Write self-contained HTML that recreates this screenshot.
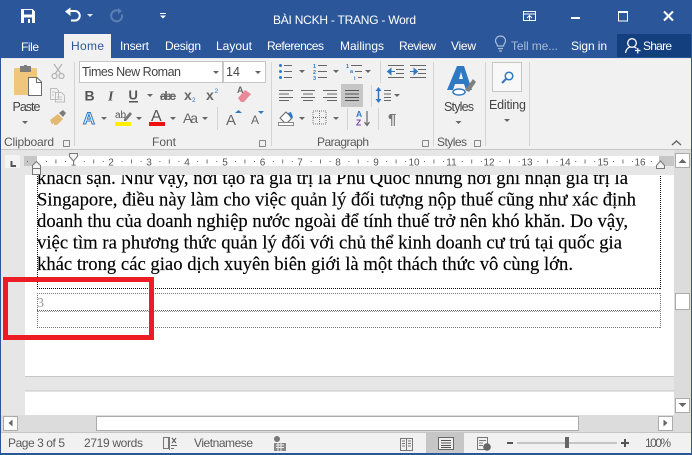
<!DOCTYPE html>
<html><head><meta charset="utf-8"><style>
html,body{margin:0;padding:0;background:#fff}
svg{display:block;font-family:"Liberation Sans",sans-serif}
.t{fill:#fff;font-size:12px}
.r{fill:#444;font-size:12.5px}
.g{fill:#5a5a5a;font-size:12px}
.n{fill:#555;font-size:10px;text-anchor:middle}
.d{fill:#000;stroke:#000;stroke-width:.15px;font-family:"Liberation Serif",serif;font-size:18.67px}
</style></head><body>
<svg width="692" height="455" viewBox="0 0 692 455" xmlns="http://www.w3.org/2000/svg">
<defs><path id="ar" d="M-3 0h6l-3 3z" fill="#666"/></defs>
<rect width="692" height="455" fill="#fff"/>
<!-- document area -->
<rect x="0" y="150" width="25" height="265" fill="#e6e6e6"/>
<rect x="25" y="376" width="649" height="15" fill="#e6e6e6"/>
<rect x="25" y="376" width="649" height="1" fill="#c6c6c6"/>
<rect x="25" y="390.500" width="649" height="1" fill="#c6c6c6"/>
<text class="d" x="37" y="184" textLength="591" lengthAdjust="spacing">khách sạn. Như vậy, nơi tạo ra giá trị là Phú Quốc nhưng nơi ghi nhận giá trị là</text>
<text class="d" x="37" y="205.500" textLength="599" lengthAdjust="spacing">Singapore, điều này làm cho việc quản lý đối tượng nộp thuế cũng như xác định</text>
<text class="d" x="37" y="227" textLength="591" lengthAdjust="spacing">doanh thu của doanh nghiệp nước ngoài để tính thuế trở nên khó khăn. Do vậy,</text>
<text class="d" x="37" y="248.500" textLength="585" lengthAdjust="spacing">việc tìm ra phương thức quản lý đối với chủ thể kinh doanh cư trú tại quốc gia</text>
<text class="d" x="37" y="270" textLength="536" lengthAdjust="spacing">khác trong các giao dịch xuyên biên giới là một thách thức vô cùng lớn.</text>
<path d="M37.500 170V289M660.500 170V289M37 288.500H661" fill="none" stroke="#111" stroke-width="1" stroke-dasharray="1 1"/>
<path d="M37 293.500H661M37 327.500H661M37.500 293V328M660.500 293V328" fill="none" stroke="#777" stroke-width="1" stroke-dasharray="1 1"/>
<path d="M37 310.500H661" stroke="#666" stroke-width="1" stroke-dasharray="1 1"/>
<path d="M38 311.500H661" stroke="#999" stroke-width="1" stroke-dasharray="1 1"/>
<text x="37" y="307" font-family="Liberation Serif,serif" font-size="14" fill="#999">3</text>
<!-- ruler -->
<rect x="0" y="150" width="674" height="25" fill="#e6e6e6"/>
<rect x="5" y="155" width="15" height="13" fill="#f4f4f4"/>
<path d="M10.500 161v6h5.500v-2h-3.500v-4z" fill="#555"/>
<rect x="24" y="156" width="13" height="10" fill="#c6c6c6"/>
<rect x="37" y="156" width="622" height="10" fill="#fff"/>
<rect x="659" y="156" width="15" height="10" fill="#c6c6c6"/>
<rect x="27" y="161" width="1" height="1" fill="#666"/>
<path d="M37 161.500H659" stroke="#666" stroke-width="1" stroke-dasharray="0 9 1 18 1 8.800"/>
<path d="M37 161.500H659" stroke="#777" stroke-width="4" stroke-dasharray="0 18.400 1 18.400"/>
<g class="n"><text class="n" x="73.500" y="165.500">1</text><text class="n" x="111" y="165.500">2</text><text class="n" x="149" y="165.500">3</text><text class="n" x="187" y="165.500">4</text><text class="n" x="225" y="165.500">5</text><text class="n" x="262.500" y="165.500">6</text><text class="n" x="300" y="165.500">7</text><text class="n" x="338" y="165.500">8</text><text class="n" x="376" y="165.500">9</text><text class="n" x="414" y="165.500">10</text><text class="n" x="451.500" y="165.500">11</text><text class="n" x="489" y="165.500">12</text><text class="n" x="527" y="165.500">13</text><text class="n" x="565" y="165.500">14</text><text class="n" x="603" y="165.500">15</text><text class="n" x="640" y="165.500">16</text></g>
<path d="M69.500 153.500h8v3l-4 4.500-4-4.500z" fill="#f4f4f4" stroke="#777"/>
<path d="M32.500 174.500v-9l4-4 4 4v9z" fill="#f4f4f4" stroke="#777"/>
<path d="M32.500 168.500h8" stroke="#777"/>
<path d="M656.500 168.500v-3l4-4.500 4 4.500v3z" fill="#f4f4f4" stroke="#777"/>
<!-- vertical scrollbar -->
<rect x="674" y="150" width="18" height="283" fill="#dcdcdc"/>
<rect x="675.500" y="153.500" width="14" height="14" fill="#fff" stroke="#ababab"/>
<path d="M678.500 163l4-4 4 4z" fill="#666"/>
<rect x="675.500" y="293.500" width="14" height="16" fill="#fff" stroke="#ababab"/>
<rect x="675.500" y="398.500" width="14" height="14" fill="#fff" stroke="#ababab"/>
<path d="M678.500 403h8l-4 4z" fill="#666"/>
<!-- horizontal scrollbar -->
<rect x="0" y="415" width="674" height="18" fill="#dcdcdc"/>
<rect x="3.500" y="416.500" width="14" height="14" fill="#fff" stroke="#ababab"/>
<path d="M12.500 419.500v7l-4-3.500z" fill="#666"/>
<rect x="96.500" y="416.500" width="482" height="14" fill="#fff" stroke="#ababab"/>
<rect x="658.500" y="416.500" width="14" height="14" fill="#fff" stroke="#ababab"/>
<path d="M663.500 419.500v7l4-3.500z" fill="#666"/>
<!-- status bar -->
<rect x="0" y="432" width="692" height="23" fill="#f1f1f1"/>
<rect x="0" y="432" width="692" height="1" fill="#c6c6c6"/>
<rect x="426" y="433" width="38" height="20" fill="#c6c6c6"/>
<text class="g" x="8" y="447" textLength="57">Page 3 of 5</text>
<text class="g" x="84" y="447" textLength="59">2719 words</text>
<text class="g" x="194" y="447" textLength="59">Vietnamese</text>
<text class="g" x="645" y="447" textLength="26">100%</text>
<path d="M163.500 437.500h5v11h-5zM169.500 450v-13M171 448.500h3" fill="none" stroke="#777"/>
<path d="M172 438l4 5M176 438l-4 5" stroke="#666" stroke-width="1.200"/>
<path d="M171 445.500h6" stroke="#666"/>
<circle cx="277" cy="439" r="3" fill="#777"/>
<rect x="274" y="443" width="12" height="8" fill="#888"/>
<path d="M276 445h8M276 447.500h8M278 443v8M281 443v8" stroke="#eee"/>
<path d="M400.500 438.500h6v12h-6zM406.500 438.500h6v12h-6zM402 441h3M402 443.500h3M402 446h3M408 441h3M408 443.500h3M408 446h3" fill="none" stroke="#777"/>
<rect x="438.500" y="437.500" width="15" height="12" fill="#eee" stroke="#666"/>
<path d="M441 440.500h10M441 443h10M441 445.500h10M441 447.500h10" stroke="#555"/>
<path d="M477.500 437.500h10v12h-10zM479 440.500h7M479 443h4M479 445.500h4" fill="#f1f1f1" stroke="#777"/>
<circle cx="487" cy="447" r="3.800" fill="#666"/>
<rect x="507" y="442" width="6" height="2" fill="#555"/>
<rect x="517" y="442.500" width="100" height="1" fill="#999"/>
<rect x="565" y="437" width="4" height="11" fill="#666"/>
<path d="M621 443h8M625 439v8" stroke="#555" stroke-width="2"/>
<!-- ribbon -->
<rect x="0" y="58" width="692" height="92" fill="#f1f1f1"/>
<rect x="0" y="149" width="692" height="1" fill="#c6c6c6"/>
<g fill="#d4d4d4"><rect x="74" y="62" width="1" height="84"/><rect x="271" y="62" width="1" height="84"/><rect x="433" y="62" width="1" height="84"/><rect x="485" y="62" width="1" height="84"/><rect x="529" y="62" width="1" height="84"/><rect x="380" y="61" width="1" height="22"/><rect x="217" y="107" width="1" height="23"/><rect x="347" y="108" width="1" height="22"/><rect x="378" y="108" width="1" height="22"/><rect x="371" y="85" width="1" height="22"/></g>
<!-- title bar -->
<rect x="0" y="0" width="692" height="58" fill="#2b579a"/>
<rect x="64" y="34" width="47" height="24" fill="#f1f1f1"/>
<rect x="617" y="34" width="74" height="23" fill="#133f7f"/>
<rect x="0" y="58" width="692" height="1" fill="#e8e8e8"/>
<rect x="64" y="58" width="47" height="1" fill="#f1f1f1"/>
<text class="t" x="273" y="24" textLength="143" fill="#e8eef7">BÀI NCKH - TRANG - Word</text>
<text class="t" x="21" y="51" textLength="18">File</text>
<text x="71" y="50" font-size="12" fill="#2b579a" textLength="33">Home</text>
<text class="t" x="120" y="50" textLength="29">Insert</text>
<text class="t" x="165" y="50" textLength="36">Design</text>
<text class="t" x="216" y="50" textLength="36">Layout</text>
<text class="t" x="267" y="50" textLength="57">References</text>
<text class="t" x="340" y="50" textLength="44">Mailings</text>
<text class="t" x="399" y="50" textLength="37">Review</text>
<text class="t" x="451" y="50" textLength="25">View</text>
<text x="511" y="50" font-size="12" fill="#a9bbd8" textLength="47">Tell me...</text>
<text class="t" x="571" y="50" textLength="36">Sign in</text>
<text class="t" x="643" y="50" textLength="29">Share</text>
<!-- QAT -->
<path d="M21 9h11.500l2.500 2.500V23H21z" fill="#fff"/>
<rect x="24" y="10" width="8" height="4.500" fill="#2b579a"/>
<rect x="24" y="17.500" width="8" height="5.500" fill="#2b579a"/>
<rect x="28" y="19" width="2" height="4" fill="#fff"/>
<path d="M70 11h5a4 4 0 0 1 0 9.500h-4" fill="none" stroke="#fff" stroke-width="2"/>
<path d="M70.500 7.500l-5.500 4 5.500 4.500z" fill="#fff"/>
<path d="M87 14h6l-3 3z" fill="#dfe6f1"/>
<path d="M118 10.500a5.500 5.500 0 1 0 4 4" fill="none" stroke="#5e7fb2" stroke-width="2"/>
<path d="M118 8v6l4-3z" fill="#5e7fb2"/>
<path d="M160 13h6v1h-6zM160 15.500h6l-3 3z" fill="#fff"/>
<!-- window controls -->
<path d="M523.500 11.500h12v9h-12zM523.500 14h12" fill="none" stroke="#fff"/>
<path d="M529.500 20v-4M527 18l2.500-2.500L532 18" fill="none" stroke="#fff"/>
<rect x="571" y="17" width="9" height="2" fill="#fff"/>
<path d="M618.500 11.500h9v9.500h-9z" fill="none" stroke="#fff"/><rect x="618" y="11" width="10" height="2" fill="#fff"/>
<path d="M664 11.500l9 9M673 11.500l-9 9" stroke="#fff" stroke-width="2"/>
<!-- bulb / person -->
<path d="M497.500 46c0-2-2-3-2-5a4.800 4.800 0 0 1 10 0c0 2-2 3-2 5zM498 48.500h5M499 51h3" fill="none" stroke="#a9bbd8" stroke-width="1.200"/>
<circle cx="632" cy="43" r="4.300" fill="none" stroke="#fff" stroke-width="1.300"/>
<path d="M625.500 53c.5-4 3-5.500 4.500-6M634 47c1 .3 2 .8 2.500 1.500M635 50.500h5.500M637.800 48v5.500" fill="none" stroke="#fff" stroke-width="1.200"/>
<!-- clipboard -->
<rect x="14" y="68" width="23" height="27" rx="1.500" fill="#f0c67c"/>
<rect x="20" y="66" width="11" height="6" fill="#7d7d7d"/><rect x="24" y="65" width="3" height="2" fill="#7d7d7d"/>
<path d="M28.500 77.500h8.500l4.500 4.500v13.500h-13z" fill="#fff" stroke="#6b6b6b"/>
<path d="M36.500 78v4.500h5" fill="none" stroke="#6b6b6b"/>
<text class="r" x="12.500" y="111" textLength="28">Paste</text>
<use href="#ar" x="25" y="121"/>
<g fill="none" stroke="#b4b4b4" stroke-width="1.300"><path d="M54 64l7 10M62 64l-7 10"/><circle cx="54.500" cy="76" r="2.500"/><circle cx="61.500" cy="76" r="2.500"/></g>
<path d="M50.500 88.500h6l2 2v9h-8zM55.500 92.500h6l3 3v6.500h-9z" fill="#f1f1f1" stroke="#bdbdbd"/>
<path d="M57 97h5M57 99.500h5M52 92h3M52 95h2" stroke="#c4c4c4"/>
<path d="M50 120l8-6 5 5-6 6h-3v-2l-2 1.500z" fill="#e3b873"/>
<path d="M59 113l4-3 3 3-3 4z" fill="#7b7b7b"/>
<!-- font combos -->
<rect x="79.500" y="61.500" width="143" height="21" fill="#fff" stroke="#c6c6c6"/>
<text class="r" x="82" y="76" textLength="99">Times New Roman</text>
<use href="#ar" x="216" y="71"/>
<rect x="223.500" y="61.500" width="42" height="21" fill="#fff" stroke="#c6c6c6"/>
<text class="r" x="226" y="76" textLength="14">14</text>
<use href="#ar" x="258" y="71"/>
<!-- font row 2 -->
<text x="84.500" y="100.500" font-size="14" font-weight="bold" fill="#555">B</text>
<text x="108" y="100.500" font-size="14" font-style="italic" font-family="Liberation Serif,serif" font-weight="bold" fill="#555">I</text>
<text x="128.500" y="99.500" font-size="13" font-weight="bold" fill="#555">U</text><rect x="129" y="101" width="9" height="1.500" fill="#555"/>
<use href="#ar" x="150" y="94"/>
<text x="160" y="100" font-size="12" font-weight="bold" fill="#666" textLength="16" text-decoration="line-through">abc</text>
<text x="184" y="100" font-size="14" font-weight="bold" fill="#666">x</text><text x="192" y="102" font-size="6.500" fill="#2f79c2">2</text>
<text x="206" y="100" font-size="14" font-weight="bold" fill="#666">x</text><text x="214.500" y="93" font-size="6.500" fill="#2f79c2">2</text>
<path d="M238 98l7-8 6 4-7 8h-3z" fill="#ea8a98"/>
<text x="237" y="93" font-size="9" font-weight="bold" fill="#666">A</text>
<!-- font row 3 -->
<text x="83" y="124" font-size="16.500" font-weight="bold" fill="#eef4fb" stroke="#2f79c2" stroke-width="1">A</text>
<use href="#ar" x="104" y="117"/>
<text x="115" y="118" font-size="10" fill="#555">ab</text>
<path d="M124 119l6-7 2 2-6 7h-2z" fill="#777"/>
<rect x="115" y="122" width="16" height="4" fill="#ffee00"/>
<use href="#ar" x="139" y="117"/>
<text x="151" y="121" font-size="16" fill="#555">A</text>
<rect x="149" y="122" width="16" height="4" fill="#ee1111"/>
<use href="#ar" x="173" y="117"/>
<text x="183" y="123" font-size="14" fill="#666" textLength="15">Aa</text>
<use href="#ar" x="205" y="117"/>
<text x="226" y="125" font-size="15" fill="#666">A</text>
<path d="M235 113l3.500-3 3.500 3z" fill="#2f79c2"/>
<text x="251" y="124" font-size="12" fill="#666">A</text>
<path d="M258 111h6l-3 3z" fill="#2f79c2"/>
<!-- bullets -->
<g fill="#2f79c2"><circle cx="280.500" cy="65.500" r="1.500"/><circle cx="280.500" cy="71.500" r="1.500"/><circle cx="280.500" cy="77.500" r="1.500"/></g>
<path d="M284 65.500h8M284 71.500h8M284 77.500h8" stroke="#666"/>
<use href="#ar" x="302" y="70"/>
<g font-size="5.500" fill="#2f79c2" font-weight="bold"><text x="313" y="68">1</text><text x="313" y="74">2</text><text x="313" y="80">3</text></g>
<path d="M318 65.500h9M318 71.500h9M318 77.500h9" stroke="#666"/>
<use href="#ar" x="336" y="70"/>
<g font-size="5.500" fill="#2f79c2" font-weight="bold"><text x="346" y="68">1</text><text x="350" y="73">a</text><text x="354" y="80">i</text></g>
<path d="M351 65.500h11M355 71.500h7M358 77.500h4" stroke="#666"/>
<use href="#ar" x="368" y="70"/>
<path d="M388 65.500h16M396 69.500h8M396 73.500h8M388 77.500h16" stroke="#666"/>
<path d="M395 71.500h-4M391 68.500v6l-3.500-3z" fill="#2f79c2" stroke="#2f79c2"/>
<path d="M410 65.500h16M418 69.500h8M418 73.500h8M410 77.500h16" stroke="#666"/>
<path d="M410 71.500h4M414 68.500v6l3.500-3z" fill="#2f79c2" stroke="#2f79c2"/>
<!-- alignment -->
<rect x="341" y="84" width="22" height="23" fill="#c6c6c6"/>
<path d="M279 90.500h14M279 94h10M279 97.500h14M279 100.500h10" stroke="#666"/>
<path d="M301 90.500h14M303 94h10M301 97.500h14M303 100.500h10" stroke="#666"/>
<path d="M323 90.500h14M327 94h10M323 97.500h14M327 100.500h10" stroke="#666"/>
<path d="M345 90.500h14M345 94h14M345 97.500h14M345 100.500h14" stroke="#555"/>
<path d="M378.500 88v14" stroke="#2f79c2" stroke-width="1.500"/>
<path d="M375.500 91l3-4 3 4zM375.500 99l3 4 3-4z" fill="#2f79c2"/>
<path d="M384 90.500h7M384 94h7M384 97.500h7M384 100.500h7" stroke="#666"/>
<use href="#ar" x="397" y="94"/>
<!-- shading, borders, sort, pilcrow -->
<path d="M280 118l6-6 6 6-6 6z" fill="#fff" stroke="#666"/>
<path d="M288 113l3-1 2 5-2 2z" fill="#2f79c2"/>
<rect x="278.500" y="122.500" width="15" height="3" fill="#fff" stroke="#888"/>
<use href="#ar" x="302" y="117"/>
<rect x="313" y="111" width="13" height="13" fill="none" stroke="#777" stroke-dasharray="1 1"/>
<path d="M319.500 111v13M313 117.500h13" stroke="#777" stroke-dasharray="1 1"/>
<use href="#ar" x="336" y="117"/>
<text x="356" y="117" font-size="8.500" font-weight="bold" fill="#2f79c2">A</text>
<text x="356" y="125.500" font-size="8.500" font-weight="bold" fill="#7a3fae">Z</text>
<path d="M367 111v14M364.500 122l2.500 3.500 2.500-3.500" fill="none" stroke="#666" stroke-width="1.200"/>
<text x="388" y="124" font-size="15" font-weight="bold" fill="#777">¶</text>
<!-- styles -->
<path d="M447 90l10-24h7l8 24h-6l-2-6h-9l-2 6z" fill="#2f79c2"/>
<path d="M459 79l2-7 2 7z" fill="#f1f1f1"/>
<path d="M465 90l8-11 3 3-7 10z" fill="#808080"/>
<ellipse cx="459" cy="92" rx="6" ry="3" fill="#fff" stroke="#2f79c2" stroke-width="1.500"/>
<text class="r" x="444" y="111" textLength="30">Styles</text>
<use href="#ar" x="458.500" y="121"/>
<rect x="492.500" y="62.500" width="29" height="29" fill="#f8f8f8" stroke="#c6c6c6"/>
<circle cx="509" cy="76" r="3.800" fill="none" stroke="#2f79c2" stroke-width="1.500"/>
<path d="M506 79l-4 4" stroke="#2f79c2" stroke-width="2"/>
<text class="r" x="489" y="109" textLength="37">Editing</text>
<use href="#ar" x="507" y="119"/>
<path d="M672 145l4.500-4 4.500 4" fill="none" stroke="#666" stroke-width="1.500"/>
<!-- group labels -->
<text class="g" x="4" y="146" textLength="50">Clipboard</text>
<text class="g" x="152" y="146" textLength="24">Font</text>
<text class="g" x="317" y="146" textLength="52">Paragraph</text>
<text class="g" x="437" y="146" textLength="30">Styles</text>
<g fill="none" stroke="#888"><path d="M63.500 140.500h6v6M63.500 140.500v6h6"/><path d="M259.500 140.500h6v6M259.500 140.500v6h6"/><path d="M422.500 140.500h6v6M422.500 140.500v6h6"/><path d="M474.500 140.500h6v6M474.500 140.500v6h6"/></g>
<!-- window edges -->
<rect x="0" y="58" width="1" height="397" fill="#2b579a"/>
<rect x="691" y="58" width="1" height="397" fill="#2b579a"/>
<rect x="0" y="453" width="692" height="2" fill="#2b579a"/>
<!-- red box -->
<rect x="5.500" y="279.500" width="146" height="58" fill="none" stroke="#ed1c24" stroke-width="5"/>
</svg>
</body></html>
